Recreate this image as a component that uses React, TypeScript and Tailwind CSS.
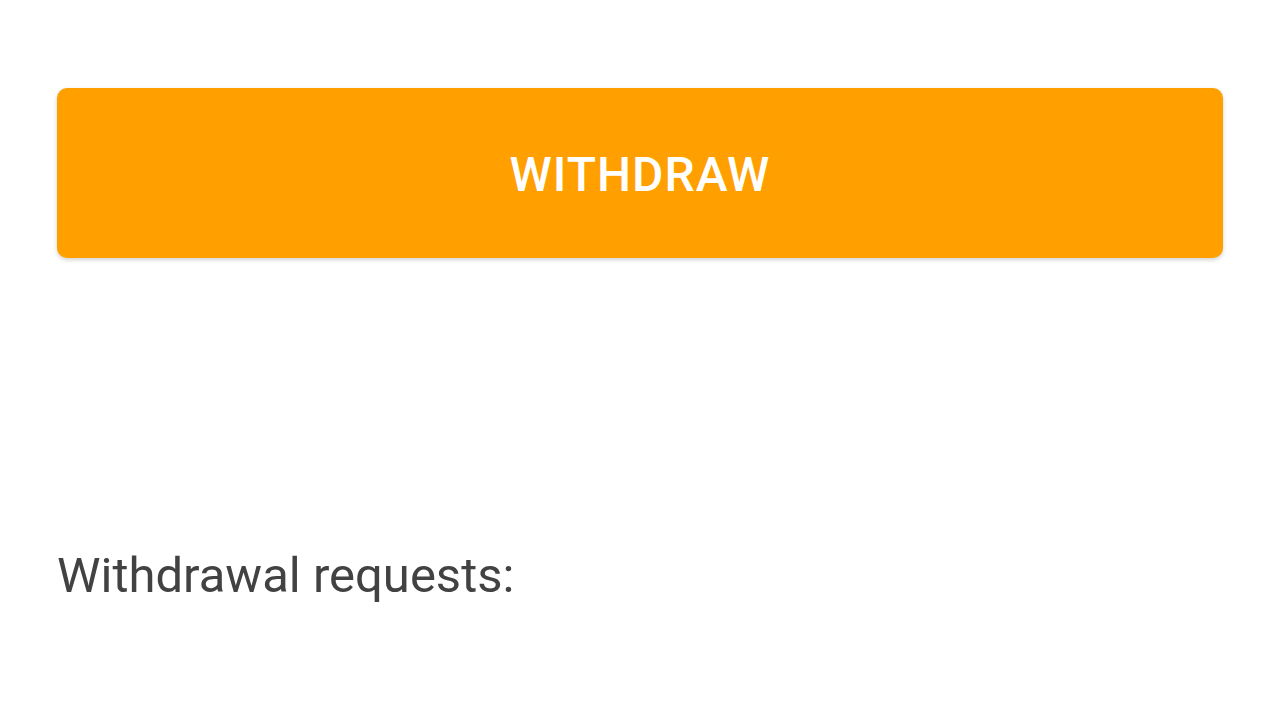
import React from "react";

const App = () => {
  return (
    <div className="min-h-[720px] w-full bg-white px-[57px] pt-[88px] font-['Roboto',sans-serif]">
      {/* withdraw button */}
      <button
        type="button"
        className="flex h-[170px] w-full items-center justify-center rounded-[10px] bg-[#ffa000] pt-[3px] text-[48px] font-medium tracking-[1px] text-white shadow-[0_2px_4px_rgba(0,0,0,0.18)]"
      >
        WITHDRAW
      </button>

      <div className="mt-[290px] text-[49px] leading-[56px] text-[#424242]">
        Withdrawal requests:
      </div>
    </div>
  );
};

export default App;
